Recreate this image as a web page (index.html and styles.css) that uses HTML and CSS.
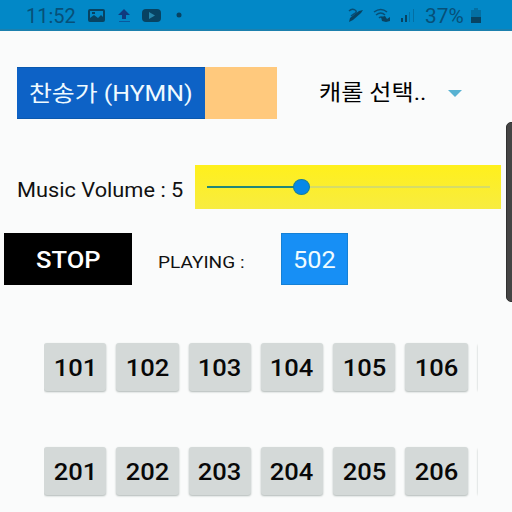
FILE: index.html
```
<!DOCTYPE html>
<html lang="ko">
<head>
<meta charset="utf-8">
<title>Hymn Player</title>
<link rel="stylesheet" href="styles.css">
</head>
<body>
<header class="status">
  <span class="clock">11:52</span>
  <svg class="notices" width="100" height="18" viewBox="0 0 100 18">
    <path fill-rule="evenodd" d="M3 2h13q2 0 2 2v9q0 2-2 2H3q-2 0-2-2V4q0-2 2-2zM3 4v7l4-3 4 3 3-3 2 2V4zM5 5h3v2H5z"/>
    <path class="navy" d="M37 2l6 6h-4v4h-4V8h-4z"/><path class="navy underline" d="M32 14h11v1H32z"/>
    <rect x="55" y="2" width="19" height="13" rx="4"/><path class="play" d="M62 5l6 3.500-6 3.500z"/>
    <circle cx="92" cy="8" r="2.500"/>
  </svg>
  <svg class="signals" width="72" height="18" viewBox="0 0 72 18">
    <path d="M6 15l1-4 9-7 4-1-2 3-8 7z"/><path class="line" d="M6 4q3-3 6-1t-1 4l-3 2"/>
    <path class="line" d="M31 5q7-5 13 0M33 8q5-4 9 0M36 11q2-2 4 0"/><path d="M38 10l4-1 2 3 3-2v4l-4 1-4-1z"/>
    <path d="M58 11h2v4h-2zM62 8h2v7h-2z"/><path class="faint" d="M66 5h1v10h-1zM70 2h1v13h-1z"/>
  </svg>
  <span class="percent"><span class="t t-percent">37%</span></span>
  <svg class="battery" width="12" height="16" viewBox="0 0 12 16"><path class="faint" d="M4 0h4v2h3v8H1V2h3z"/><path d="M1 9h10v6H1z"/></svg>
</header>
<main>
  <section class="pickers">
    <div class="hymn"><div class="hymn-label"><span class="t t-hymn">찬송가 (HYMN)</span></div></div>
    <div class="carol"><span class="t t-carol">캐롤 선택..</span></div>
    <svg class="arrow" width="14" height="7" viewBox="0 0 14 7"><path d="M0 0h14L7 7z"/></svg>
  </section>
  <section class="volume">
    <div class="volume-label"><span class="t t-volume">Music Volume : 5</span></div>
    <div class="slider"><div class="track"><div class="fill"></div><div class="thumb"></div></div></div>
  </section>
  <section class="playback">
    <div class="stop"><span class="t t-stop">STOP</span></div>
    <div class="playing"><span class="t t-playing">PLAYING :</span></div>
    <div class="number"><span class="t t-number">502</span></div>
  </section>
  <section class="songs">
    <div class="row"><button><span>101</span></button><button><span>102</span></button><button><span>103</span></button><button><span>104</span></button><button><span>105</span></button><button><span>106</span></button><button></button></div>
    <div class="row"><button><span>201</span></button><button><span>202</span></button><button><span>203</span></button><button><span>204</span></button><button><span>205</span></button><button><span>206</span></button><button></button></div>
  </section>
</main>
<div class="edge-handle"></div>
</body>
</html>
```
FILE: styles.css
```
* { box-sizing: border-box; }
body {
  margin: 0;
  width: 512px;
  height: 512px;
  overflow: hidden;
  position: relative;
  background: #fafbfb;
  color: #111;
  font-family: Roboto, "Noto Sans CJK KR", sans-serif;
}
.status {
  height: 31px;
  padding: 3px 0 0 26px;
  display: flex;
  align-items: center;
  background: #0288c7;
  border-bottom: 2px solid #1b80ae;
  color: #075078;
  font-size: 20px;
  line-height: 26px;
}
.status svg { fill: #084362; flex: none; }
.status .line { fill: none; stroke: #084e75; stroke-width: 1.500; }
.status .navy { fill: #103b80; }
.status .underline { opacity: .6; }
.status .play { fill: #2685aa; }
.status .faint { opacity: .35; }
.clock { width: 61px; }
.notices { width: 100px; }
.signals { margin-left: 156px; }
.percent { width: 45px; margin-left: 10px; }
.battery { margin-left: 0; }

.t { display: inline-block; white-space: nowrap; transform-origin: left center; }
.pickers { display: flex; align-items: center; height: 52px; margin: 36px 0 0 17px; }
.hymn { width: 260px; height: 52px; background: #ffc97d; }
.hymn-label {
  width: 188px;
  height: 52px;
  padding-left: 12px;
  background: #0d62c6;
  border: solid #0a58ae;
  border-width: 1px 0;
  color: #effaff;
  font-size: 22px;
  line-height: 52px;
}
.carol { width: 129px; margin-left: 42px; font-size: 22px; line-height: 56px; color: #000; }
.arrow { fill: #58b2d2; }

.volume { display: flex; height: 44px; margin: 46px 0 0 17px; }
.volume-label { width: 178px; font-size: 20px; line-height: 51px; }
.slider { width: 306px; height: 44px; padding: 21px 11px 0 12px; background: linear-gradient(#fff01c, #f7ec40); }
.track { position: relative; height: 2px; background: #d5dc68; }
.fill { width: 94px; height: 2px; background: #218779; }
.thumb { position: absolute; left: 86px; top: -7px; width: 17px; height: 16px; border-radius: 50%; background: #0788e8; border: 1px solid #167e9b; }

.playback { display: flex; height: 52px; margin: 24px 0 0 4px; }
.stop { width: 128px; padding-left: 32px; background: #000; color: #fff; font-size: 23px; font-weight: 500; line-height: 56px; }
.playing { width: 149px; padding-left: 26px; font-size: 17px; line-height: 58px; }
.number { width: 67px; padding-left: 11px; background: #178ff5; border: 1px solid #1580d5; color: #effbff; font-size: 23px; line-height: 54px; }

.songs { margin: 58px 0 0 44px; width: 434px; }
.row { display: flex; gap: 10px; height: 48px; width: 434px; overflow-x: clip; overflow-y: visible; }
.row + .row { margin-top: 56px; }
.row button {
  flex: none;
  width: 62.300px;
  height: 48px;
  padding: 2px 0 0;
  border: 0;
  border-radius: 3px;
  background: #d4d9d8;
  box-shadow: 0 1px 2px #b0b8b6;
  color: #080808;
  font: 500 23px/47px Roboto, sans-serif;
}
.row span { display: inline-block; transform: scaleX(1.110); }
.edge-handle { position: absolute; left: 506px; top: 122px; width: 12px; height: 180px; border-radius: 5px; background: #444; border: 1px solid #303030; }

.t-percent { transform: scaleX(1.040); }
.t-hymn { transform: scaleX(1.130); }
.t-carol { transform: scaleX(1.095); }
.t-volume { transform: scaleX(1.088); }
.t-stop { transform: scaleX(1.110); }
.t-playing { transform: scaleX(1.120); }
.t-number { transform: scaleX(1.100); }
```
